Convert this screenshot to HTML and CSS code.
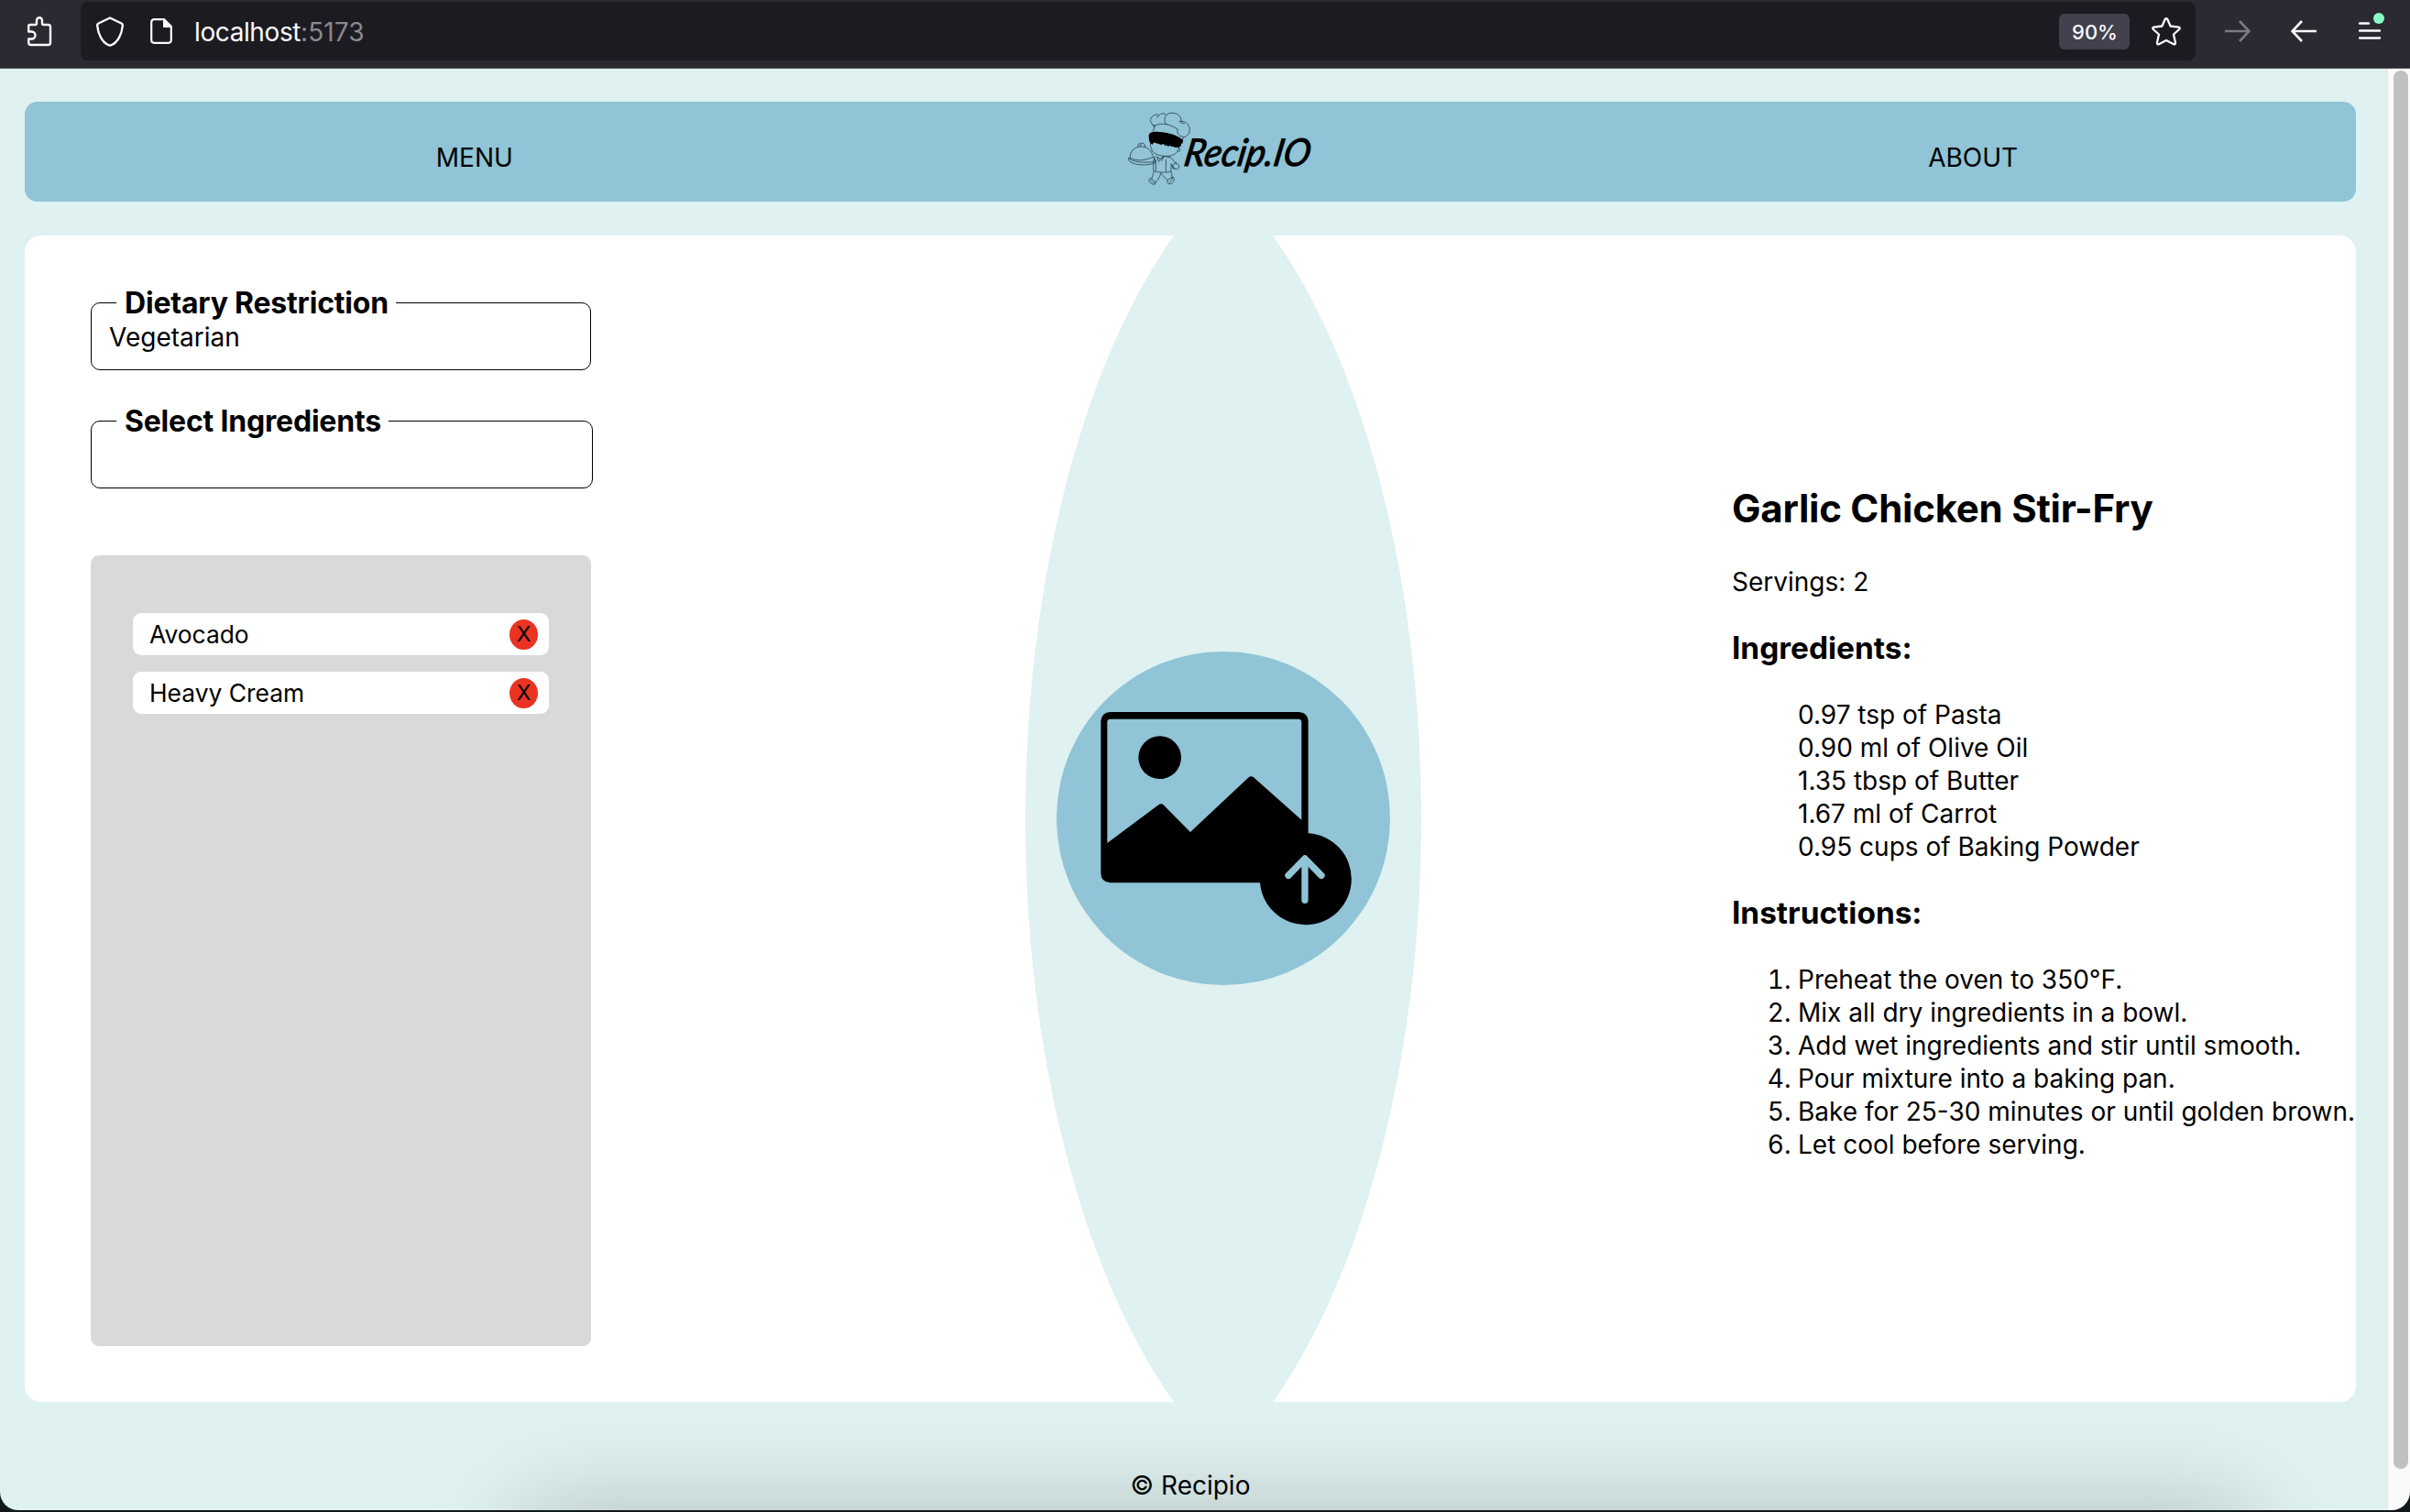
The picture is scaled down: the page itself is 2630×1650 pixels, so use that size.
FILE: index.html
```html
<!DOCTYPE html>
<html lang="en">
<head>
<meta charset="utf-8">
<title>Recip.IO</title>
<link rel="stylesheet" href="styles.css">
</head>
<body>
<div class="window">
  <header class="toolbar">
    <svg class="icon-puzzle" width="28" height="34" viewBox="0 0 28 34" fill="none" stroke="#fbfbfe" stroke-width="2.4" stroke-linejoin="round"><path d="M2.2 17.5V11.5Q2.2 10 3.7 10H9.5Q11 10 11 8.5V5.5a3 3.3 0 0 1 6 0V8.500Q17 10 18.500 10H23.500Q26 10 26 12.500V29.500Q26 32 23.500 32H4.700Q2.200 32 2.200 29.500V25.500H5.500a4 4 0 0 0 0-8Z"/></svg>
    <div class="urlbar">
      <svg width="30" height="34" viewBox="0 0 30 34" fill="none" stroke="#fbfbfe" stroke-width="2.4" stroke-linejoin="round"><path d="M15 2.500 27.500 8.500Q29 9.200 28.800 11C28 20.500 23.500 29 17 32Q15 33 13 32C6.500 29 2 20.500 1.200 11Q1 9.200 2.500 8.500Z"/></svg>
      <svg class="icon-page" width="24" height="28" viewBox="0 0 24 28"><path d="M14.500 1.200H4.200Q1.200 1.200 1.200 4.200V23.800Q1.200 26.800 4.200 26.800H19.800Q22.800 26.800 22.800 23.800V9.500" fill="none" stroke="#fbfbfe" stroke-width="2.200"/><path d="M14 0h1.500L24 8.500V10H14Z" fill="#fbfbfe"/></svg>
      <span class="host">localhost<span class="port">:5173</span></span>
      <span class="zoom">90%</span>
      <svg class="icon-star" width="32" height="31" viewBox="0 0 32 31" fill="none" stroke="#fbfbfe" stroke-width="2.300" stroke-linejoin="round"><path d="M14.700 2Q16 .4 17.300 2L20.600 9.500 29.500 10.700Q31.500 11.200 30.200 13L24 18.500 26 27.500Q26.200 29.800 24 29.200L16 25 8 29.200Q5.800 29.800 6 27.500L8 18.500 1.800 13Q.5 11.200 2.500 10.700L11.400 9.500Z"/></svg>
    </div>
    <svg class="icon-forward" width="28" height="24" viewBox="0 0 28 24" fill="none" stroke="#7c7b81" stroke-width="2.600"><path d="M0 12H26M16 1 26.500 12 16 23"/></svg>
    <svg class="icon-back" width="28" height="24" viewBox="0 0 28 24" fill="none" stroke="#fbfbfe" stroke-width="2.600"><path d="M28 12H2M12 1 1.500 12 12 23"/></svg>
    <svg class="icon-menu" width="30" height="32" viewBox="0 0 30 32"><path d="M1 11.500H11M1 19.500H23M1 27.500H23" stroke="#fbfbfe" stroke-width="2.400" stroke-linecap="round"/><circle cx="22" cy="6" r="6" fill="#88ffc2"/></svg>
  </header>

  <div class="viewport">
    <div class="page">
      <nav class="nav">
        <a class="nav-link">MENU</a>
        <svg class="logo" width="214" height="109" viewBox="84 33 642 327">
          <g transform="translate(72 48)" fill="none" stroke="#15242b" stroke-width="2">
            <path d="M107 64C94 58 90 40 102 32 108 26 118 26 122 30 128 22 142 22 146 28M122 30Q117 33 115 38M142 52C136 30 152 21 168 22 184 23 197 34 195 50M142 52Q143 57 148 60M188 50C206 44 224 60 223 78 222 94 208 104 198 99 184 96 180 84 184 74M192 54Q199 52 206 58M107 64C130 52 160 58 184 76M110 61 103 82M203 101 197 116M106 68Q103 62 101 58"/>
            <path d="M89 98C88 86 102 82 122 84 155 86 185 96 201 110L200 121 195 122 194 132 189 131 188 138 183 134 174 135 168 131 162 133 161 128 152 131 146 127 141 130 139 123 128 126 120 122 112 121 106 118 101 125 95 122C90 116 89 106 89 98Z" fill="#000" stroke="none"/>
            <path d="M98 118C92 124 94 134 98 136 96 152 118 163 146 163 172 163 184 152 186 138M188 136C195 140 190 150 184 148"/>
            <path d="M29 170C24 152 40 132 64 132 86 132 98 146 103 164M55 132Q50 122 62 122 72 118 76 126 80 132 73 134M59 131Q60 124 66 127M22 168C28 182 80 188 110 180L106 166 98 168C70 180 48 178 29 170 25 166 21 170 24 178 36 194 88 196 112 184"/>
            <path d="M110 164C104 170 104 190 104 212 124 218 146 217 162 214M112 164 126 172 138 164M120 180 138 164M118 166Q116 178 124 182M138 166 130 180M145 173V214M112 174V212M152 164C166 168 172 180 180 190M162 214 162 188 174 206M138 163 158 168M168 192 178 184 188 194Q190 204 182 206L166 202Z"/>
            <path d="M106 214C102 224 101 230 98 238M130 217Q124 230 118 242M128 220 148 240M162 214Q166 224 165 234M98 236C90 232 86 244 96 252 104 258 112 256 112 250ZM94 240Q102 248 108 254M118 242 110 250M148 242 168 232C176 234 172 252 160 254 152 256 146 248 152 244ZM156 250Q166 242 168 232"/>
          </g>
          <text class="logo-text" transform="translate(272 244) skewX(-10)" textLength="412" lengthAdjust="spacingAndGlyphs">Recip.IO</text>
        </svg>
        <a class="nav-link">ABOUT</a>
      </nav>

      <main class="board">
        <section class="filters">
          <fieldset class="field">
            <legend>Dietary Restriction</legend>
            <span>Vegetarian</span>
          </fieldset>
          <fieldset class="field field-wide">
            <legend>Select Ingredients</legend>
          </fieldset>
          <ul class="picked">
            <li><span>Avocado</span><button class="remove">X</button></li>
            <li><span>Heavy Cream</span><button class="remove">X</button></li>
          </ul>
        </section>

        <section class="lens">
          <svg class="upload" width="364" height="364" viewBox="162 63 1090 1092">
            <path d="M337 261H955Q985 265 985 291V658A150 150 0 1 1 827 820H337Q306 818 306 789V291Q308 263 337 261ZM327 690 495 565Q503 558 511 565L599 654 790 475Q798 468 806 475L963 614V294Q963 284 953 284H337Q327 284 327 294Z" fill-rule="evenodd"/>
            <circle cx="499" cy="410" r="70"/>
            <path d="M974 877V745M920 796 974 741 1028 796" fill="none" stroke="#90c4d6" stroke-width="22" stroke-linecap="round" stroke-linejoin="round"/>
          </svg>
        </section>

        <section class="recipe">
          <h2>Garlic Chicken Stir-Fry</h2>
          <p>Servings: 2</p>
          <h3>Ingredients:</h3>
          <ul>
            <li>0.97 tsp of Pasta</li>
            <li>0.90 ml of Olive Oil</li>
            <li>1.35 tbsp of Butter</li>
            <li>1.67 ml of Carrot</li>
            <li>0.95 cups of Baking Powder</li>
          </ul>
          <h3>Instructions:</h3>
          <ol>
            <li>Preheat the oven to 350°F.</li>
            <li>Mix all dry ingredients in a bowl.</li>
            <li>Add wet ingredients and stir until smooth.</li>
            <li>Pour mixture into a baking pan.</li>
            <li>Bake for 25-30 minutes or until golden brown.</li>
            <li>Let cool before serving.</li>
          </ol>
        </section>
      </main>

      <footer class="footer">© Recipio</footer>
    </div>
    <div class="scrollbar"><div class="thumb"></div></div>
  </div>
</div>
</body>
</html>
```
FILE: styles.css
```css
* { box-sizing: border-box; }

body {
  margin: 0;
  background: #10181c;
  color: #000;
  font: 28px/36px Inter, "Noto Sans", sans-serif;
}

.window {
  height: 1648px;
  display: flex;
  flex-direction: column;
  overflow: hidden;
  border-radius: 0 0 20px 20px;
}

/* Browser toolbar */
.toolbar {
  flex: none;
  height: 75px;
  display: flex;
  align-items: flex-start;
  background: #2b2a33;
  border-bottom: 1px solid #55545c;
}
.toolbar svg { flex: none; display: block; }
.icon-puzzle { margin: 17px 31px 0 29px; }
.urlbar {
  width: 2308px;
  height: 64px;
  margin-top: 2px;
  padding: 0 16px 0 17px;
  display: flex;
  align-items: center;
  background: #1c1b22;
  border-radius: 8px;
}
.icon-page { margin: 0 24px 0 29px; }
.host { padding-top: 2px; color: #fbfbfe; letter-spacing: -0.4px; }
.port { color: #8a898f; letter-spacing: 0.1px; }
.zoom {
  width: 77px;
  height: 39px;
  margin: 1px 24px 0 auto;
  padding: 1px 0 0 1px;
  background: #42414d;
  border-radius: 6px;
  color: #fbfbfe;
  font-size: 22px;
  font-weight: 500;
  line-height: 39px;
  text-align: center;
}
.icon-forward { margin: 22px 44px 0 32px; }
.icon-back { margin: 22px 46px 0 0; }
.icon-menu { margin-top: 14px; }

/* Page */
.viewport { flex: 1; display: flex; min-height: 0; }
.page {
  position: relative;
  flex: 1;
  padding: 36px 33px 0 27px;
  background: #dff1f0;
  overflow: hidden;
}
/* Soft shade rising from the bottom edge */
.page::after {
  content: "";
  position: absolute;
  left: 570px;
  right: 150px;
  top: 1575px;
  height: 160px;
  box-shadow: 0 0 110px rgba(0, 0, 0, 0.22);
}
.nav {
  height: 109px;
  padding: 0 9px 0 82px;
  display: grid;
  grid-template-columns: repeat(3, 1fr);
  align-items: center;
  justify-items: center;
  background: #90c4d6;
  border-radius: 14px;
}
.nav-link { padding-top: 13px; }
.logo { display: block; }
.logo-text {
  font: italic 400 124px Lato, "Open Sans", sans-serif;
  stroke: #000;
  stroke-width: 3px;
}

.board {
  height: 1273px;
  margin-top: 37px;
  display: grid;
  grid-template-columns: 1091px 434px 1fr;
  align-items: start;
  background: #fff;
  border-radius: 18px;
  overflow: hidden;
}

.filters { padding: 54px 0 0 72px; }
.field {
  width: 546px;
  height: 93px;
  min-width: 0;
  margin: 0;
  padding: 1px 19px 0;
  border: 1px solid #000;
  border-radius: 10px;
}
.field legend {
  margin-left: 8px;
  padding: 2px 8px 0 9px;
  font-size: 32px;
  font-weight: 700;
  line-height: 36px;
  letter-spacing: -0.2px;
}
.field-wide { width: 548px; margin-top: 36px; }
.picked {
  width: 546px;
  height: 863px;
  margin: 73px 0 0;
  padding: 63px 46px 0;
  display: flex;
  flex-direction: column;
  gap: 18px;
  list-style: none;
  background: #d9d9d9;
  border-radius: 9px;
}
.picked li {
  height: 46px;
  padding: 0 12px 0 18px;
  display: flex;
  align-items: center;
  justify-content: space-between;
  background: #fff;
  border-radius: 9px;
  font-size: 26.4px;
}
.remove {
  width: 31px;
  height: 33px;
  padding: 0;
  border: 0;
  border-radius: 50%;
  background: #eb3323;
  color: #000;
  font: 23px/33px Inter, sans-serif;
}

/* Lens-shaped divider between two large curves */
.lens {
  height: 1273px;
  display: flex;
  align-items: center;
  justify-content: center;
  background: #dff1f0;
  clip-path: path("M163 0A370.6 770 0 0 0 163 1273H271A370.6 770 0 0 0 271 0Z");
}
.upload {
  margin-bottom: 1px;
  background: #90c4d6;
  border-radius: 50%;
}

.recipe { padding: 272px 0 0 338px; white-space: nowrap; }
.recipe h2 {
  margin: 0 0 36px;
  font-size: 42px;
  line-height: 52px;
  letter-spacing: -0.25px;
}
.recipe p { margin: 0; }
.recipe h3 {
  margin: 33px 0 34px;
  font-size: 33.4px;
  line-height: 42px;
}
.recipe ul,
.recipe ol { margin: 0; padding-left: 72px; }
.recipe ul { list-style: none; }

.footer { margin-top: 73px; text-align: center; }

.scrollbar {
  width: 26px;
  padding: 2px 2px 0 6px;
  background: #fafafa;
  border-left: 2px solid #e8e8e8;
}
.thumb {
  height: 1526px;
  background: #c1c1c1;
  border-radius: 8px;
}
```
